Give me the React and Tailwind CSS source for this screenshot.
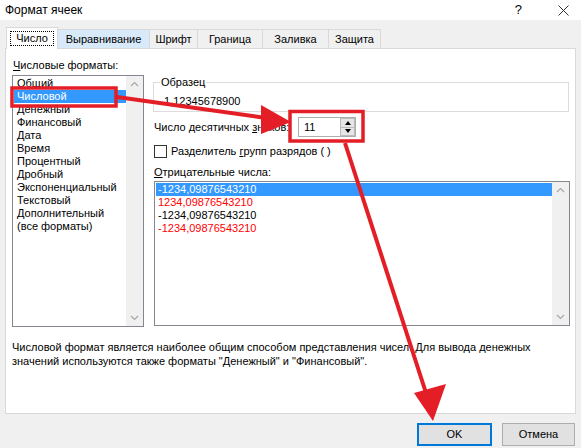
import React from 'react';

const formats = [
  'Общий',
  'Числовой',
  'Денежный',
  'Финансовый',
  'Дата',
  'Время',
  'Процентный',
  'Дробный',
  'Экспоненциальный',
  'Текстовый',
  'Дополнительный',
  '(все форматы)',
];

const negatives = [
  { text: '-1234,09876543210', color: 'text-white', selected: true },
  { text: '1234,09876543210', color: 'text-[#ff0000]' },
  { text: '-1234,09876543210', color: 'text-black' },
  { text: '-1234,09876543210', color: 'text-[#ff0000]' },
];

const tabs = [
  { label: 'Число', w: 'w-[52px]', active: true },
  { label: 'Выравнивание', w: 'w-[92px]', hover: true },
  { label: 'Шрифт', w: 'w-[48px]' },
  { label: 'Граница', w: 'w-[65px]' },
  { label: 'Заливка', w: 'w-[66px]' },
  { label: 'Защита', w: 'w-[52px]' },
];

function Chevron({ up }) {
  return (
    <svg width="9" height="6" viewBox="0 0 9 6">
      <path
        d={up ? 'M1 5 L4.5 1.5 L8 5' : 'M1 1 L4.5 4.5 L8 1'}
        fill="none"
        stroke="#a6a6a6"
        strokeWidth="1.2"
      />
    </svg>
  );
}

function Scrollbar() {
  return (
    <div className="w-[17px] h-full bg-[#f0f0f0] flex flex-col items-center justify-between py-[5px]">
      <Chevron up />
      <Chevron />
    </div>
  );
}

function Annotations() {
  // red marks drawn over the dialog
  const red = '#e41e26';
  return (
    <svg className="absolute inset-0 pointer-events-none" width="581" height="448" viewBox="0 0 581 448">
      <rect x="12" y="88" width="104" height="18" fill="none" stroke={red} strokeWidth="3.5" />
      <rect x="290" y="111.5" width="73" height="29.5" fill="none" stroke={red} strokeWidth="3.5" />
      <line x1="117" y1="97" x2="266" y2="118" stroke={red} strokeWidth="4" />
      <polygon points="291,122 261,105 261,134" fill={red} />
      <line x1="345" y1="143" x2="427" y2="396" stroke={red} strokeWidth="4" />
      <polygon points="433,421 414,393 446,384" fill={red} />
    </svg>
  );
}

export default function App() {
  return (
    <div
      className="relative w-[581px] h-[448px] bg-[#f0f0f0] overflow-hidden text-[11px] text-black"
      style={{ fontFamily: '"Liberation Sans", Arial, sans-serif' }}
    >
      {/* title bar */}
      <div className="h-[20px] bg-white flex items-center pl-[5px] pr-[12px]">
        <span className="text-[12px]">Формат ячеек</span>
        <span className="ml-auto mr-[36px] text-[13px]">?</span>
        <svg width="11" height="11" viewBox="0 0 11 11">
          <path d="M0.5 0.5 L10.5 10.5 M10.5 0.5 L0.5 10.5" stroke="#333" strokeWidth="1" />
        </svg>
      </div>

      {/* tabs */}
      <div className="flex items-end pl-[6px] pt-[7px] h-[28px]">
        {tabs.map((t) =>
          t.active ? (
            <div
              key={t.label}
              className={`${t.w} h-[22px] bg-white border border-b-0 border-[#d9d9d9] flex items-center justify-center relative z-10 -mb-px`}
            >
              <span className="border border-dotted border-black px-[5px] leading-[13px]">{t.label}</span>
            </div>
          ) : (
            <div
              key={t.label}
              className={`${t.w} h-[19px] border border-b-0 border-l-0 border-[#d9d9d9] flex items-center justify-center ${
                t.hover ? 'bg-[#d8eaf9]' : 'bg-[#f0f0f0]'
              }`}
            >
              {t.label}
            </div>
          )
        )}
      </div>

      {/* panel */}
      <div className="mx-[5px] h-[366px] bg-white border border-[#d9d9d9] flex flex-col">
        <div className="flex pt-[9px] pl-[6px]">
          {/* left column */}
          <div className="w-[132px] flex flex-col">
            <div className="pl-[1px] h-[17px] leading-[14px]">
              <span className="underline">Ч</span>исловые форматы:
            </div>
            <div className="h-[252px] border border-[#828790] flex">
              <div className="flex-1 pt-[1px] pl-[1px]">
                {formats.map((f, i) => (
                  <div
                    key={f}
                    className={`h-[13px] leading-[13px] pl-[3px] ${i === 1 ? 'bg-[#3399ff] text-white' : ''}`}
                  >
                    {f}
                  </div>
                ))}
              </div>
              <Scrollbar />
            </div>
          </div>

          {/* right column */}
          <div className="ml-[9px] w-[416px] flex flex-col">
            <fieldset className="mt-[17px] h-[37px] border border-[#dcdcdc] px-[10px]">
              <legend className="ml-[-4px] px-[1px] leading-[14px]">Образец</legend>
              <div className="leading-[14px] pt-[5px]">1,12345678900</div>
            </fieldset>

            <div className="mt-[5px] h-[20px] flex items-center pl-[1px]">
              <div className="w-[144px]">
                Число десятичных <span className="underline">з</span>наков:
              </div>
              <div className="w-[58px] h-[20px] border border-[#adadad] flex items-center bg-white">
                <span className="pl-[5px] flex-1">11</span>
                <div className="w-[15px] h-[18px] flex flex-col">
                  <div className="flex-1 bg-[#e6e6e6] border border-[#bcbcbc] flex items-center justify-center">
                    <svg width="6" height="4" viewBox="0 0 6 4">
                      <path d="M0 4 L3 0 L6 4 Z" fill="#000" />
                    </svg>
                  </div>
                  <div className="flex-1 bg-[#e6e6e6] border border-t-0 border-[#bcbcbc] flex items-center justify-center">
                    <svg width="6" height="4" viewBox="0 0 6 4">
                      <path d="M0 0 L3 4 L6 0 Z" fill="#000" />
                    </svg>
                  </div>
                </div>
              </div>
            </div>

            <div className="mt-[8px] h-[13px] flex items-center pl-[1px]">
              <div className="w-[13px] h-[13px] border border-[#333] bg-white" />
              <span className="ml-[4px]">
                Разделитель <span className="underline">г</span>рупп разрядов ( )
              </span>
            </div>

            <div className="mt-[7px] h-[16px] leading-[14px] pl-[1px]">
              <span className="underline">О</span>трицательные числа:
            </div>
            <div className="ml-[1px] w-[416px] h-[145px] border border-[#828790] flex">
              <div className="flex-1 pt-[1px] pl-[1px]">
                {negatives.map((n, i) => (
                  <div
                    key={i}
                    className={`h-[13px] leading-[13px] pl-[2px] ${n.color} ${n.selected ? 'bg-[#3399ff]' : ''}`}
                  >
                    {n.text}
                  </div>
                ))}
              </div>
              <Scrollbar />
            </div>
          </div>
        </div>

        <div className="mt-[13px] pl-[6px] leading-[14px]">
          <div>Числовой формат является наиболее общим способом представления чисел. Для вывода денежных</div>
          <div>значений используются также форматы "Денежный" и "Финансовый".</div>
        </div>
      </div>

      {/* buttons */}
      <div className="flex justify-end gap-[10px] pr-[6px] mt-[9px]">
        <button className="w-[75px] h-[23px] bg-[#e1e1e1] border-2 border-[#0078d7] flex items-center justify-center">
          OK
        </button>
        <button className="w-[73px] h-[23px] bg-[#e1e1e1] border border-[#adadad] flex items-center justify-center">
          Отмена
        </button>
      </div>

      <Annotations />
    </div>
  );
}
